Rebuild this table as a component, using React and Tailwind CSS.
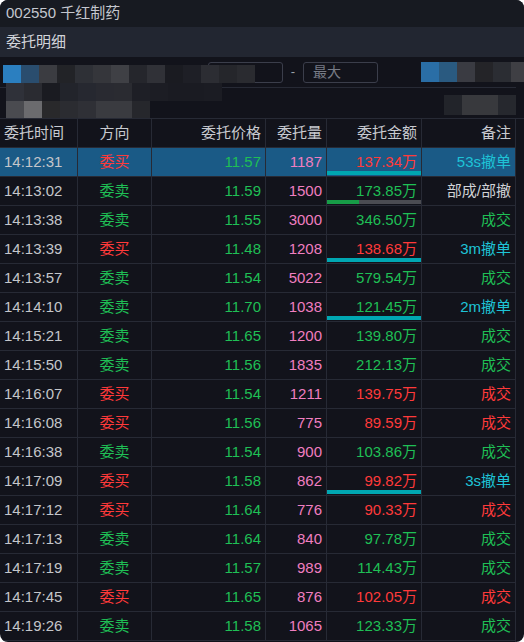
import React from "react";

const RED = "text-[#ff3a3a]";
const GREEN = "text-[#1fbf55]";
const CYAN = "text-[#1ec3d6]";

const rows = [
  ["14:12:31", "b", "11.57", "1187", "137.34万", "53s撤单", "cyan"],
  ["14:13:02", "s", "11.59", "1500", "173.85万", "部成/部撤", "part"],
  ["14:13:38", "s", "11.55", "3000", "346.50万", "成交", null],
  ["14:13:39", "b", "11.48", "1208", "138.68万", "3m撤单", "cyan"],
  ["14:13:57", "s", "11.54", "5022", "579.54万", "成交", null],
  ["14:14:10", "s", "11.70", "1038", "121.45万", "2m撤单", "cyan"],
  ["14:15:21", "s", "11.65", "1200", "139.80万", "成交", null],
  ["14:15:50", "s", "11.56", "1835", "212.13万", "成交", null],
  ["14:16:07", "b", "11.54", "1211", "139.75万", "成交", null],
  ["14:16:08", "b", "11.56", "775", "89.59万", "成交", null],
  ["14:16:38", "s", "11.54", "900", "103.86万", "成交", null],
  ["14:17:09", "b", "11.58", "862", "99.82万", "3s撤单", "cyan"],
  ["14:17:12", "b", "11.64", "776", "90.33万", "成交", null],
  ["14:17:13", "s", "11.64", "840", "97.78万", "成交", null],
  ["14:17:19", "s", "11.57", "989", "114.43万", "成交", null],
  ["14:17:45", "b", "11.65", "876", "102.05万", "成交", null],
  ["14:19:26", "s", "11.58", "1065", "123.33万", "成交", null],
];

const mosaicA = ["#2b7fc0", "#2a4d6e", "#3b3c41", "#222327", "#2e3036", "#35363b", "#3f4045", "#25262c", "#303137", "#1a1b21", "#1e1f26", "#2c2d33", "#25262b", "#2a2b30"];
const mosaicB = ["#2f3139", "#2a2b31", "#1a1b21", "#22242b", "#262830", "#292a31", "#2a2b31", "#1e1f26", "#1c1d24", "#1a1b22", "#1a1b22", "#1b1c23"];
const mosaicC = ["#4a4b50", "#6b6b6e", "#29292b", "#2b2c31", "#2f3036", "#3a3b40", "#3a3b40", "#26272c"];
const mosaicR1 = ["#2a6ea6", "#2a5a80", "#3a3b42", "#242428", "#2b2d33", "#3f3f44"];
const mosaicR2 = ["#22242a", "#38393d", "#38393d", "#26282e"];

function Blocks({ colors, w = "w-[18px]", h = "h-[18px]" }) {
  return (
    <div className="flex">
      {colors.map((c, i) => (
        <div key={i} className={`${w} ${h}`} style={{ background: c }} />
      ))}
    </div>
  );
}

export default function App() {
  const font = { fontFamily: '"Liberation Sans", "Noto Sans CJK SC", sans-serif' };
  return (
    <div className="w-[524px] h-[642px] bg-white" style={font}>
      <div className="w-[524px] h-[642px] rounded-[8px] overflow-hidden bg-[#12131b] flex flex-col text-[15px]">
        <div className="h-[27px] bg-[#171a21] flex items-center px-[6px] text-[#c4c7cf] shrink-0">
          002550 千红制药
        </div>
        <div className="h-[30px] bg-[#222631] flex items-center px-[6px] text-[#d2d4da] shrink-0">
          委托明细
        </div>
        <div className="relative h-[62px] shrink-0 border-b border-[#272a35]">
          <div className="h-[31px] border-b border-[#272a35] mr-[8px] flex items-center pl-[208px]">
            <div className="w-[75px] h-[21px] border border-[#3b3e4b] rounded-[3px]" />
            <div className="w-[20px] flex justify-center text-[#9aa0aa] text-[13px]">-</div>
            <div className="w-[75px] h-[21px] border border-[#3b3e4b] rounded-[3px] flex items-center px-[9px] text-[#777b86] text-[14px]">
              最大
            </div>
          </div>
          <div className="absolute left-[3px] top-[8px] flex flex-col">
            <Blocks colors={mosaicA} />
            <div className="pl-[3px]"><Blocks colors={mosaicB} /></div>
            <div className="pl-[3px]"><Blocks colors={mosaicC} h="h-[17px]" /></div>
          </div>
          <div className="absolute left-[421px] top-[5px] flex flex-col">
            <Blocks colors={mosaicR1} h="h-[20px]" />
          </div>
          <div className="absolute left-[444px] top-[38px] flex">
            <Blocks colors={mosaicR2} h="h-[20px]" />
          </div>
        </div>
        <div className="flex-1 flex">
          <div className="w-[516px] border-r border-[#272a35]">
            <div className="flex h-[29px] border-b border-[#272a35] text-[#c8cad0]">
              <div className="w-[78px] border-r border-[#272a35] flex items-center pl-[4px]">委托时间</div>
              <div className="w-[74px] border-r border-[#272a35] flex items-center justify-center">方向</div>
              <div className="w-[114px] border-r border-[#272a35] flex items-center justify-end pr-[4px]">委托价格</div>
              <div className="w-[61px] border-r border-[#272a35] flex items-center justify-end pr-[4px]">委托量</div>
              <div className="w-[95px] border-r border-[#272a35] flex items-center justify-end pr-[4px]">委托金额</div>
              <div className="flex-1 flex items-center justify-end pr-[4px]">备注</div>
            </div>
            {rows.map((r, i) => {
              const buy = r[1] === "b";
              const dc = buy ? RED : GREEN;
              const noteCls = r[5].includes("撤单") ? CYAN : r[5] === "成交" ? dc : "text-[#d0d2d6]";
              return (
                <div key={i} className={`flex h-[29px] border-b border-[#272a35] ${i === 0 ? "bg-[#1a5a86]" : ""}`}>
                  <div className="w-[78px] border-r border-[#272a35] flex items-center pl-[4px] text-[#c4c6ca]">{r[0]}</div>
                  <div className={`w-[74px] border-r border-[#272a35] flex items-center justify-center ${dc}`}>{buy ? "委买" : "委卖"}</div>
                  <div className={`w-[114px] border-r border-[#272a35] flex items-center justify-end pr-[4px] ${GREEN}`}>{r[2]}</div>
                  <div className="w-[61px] border-r border-[#272a35] flex items-center justify-end pr-[4px] text-[#f07ec0]">{r[3]}</div>
                  <div className={`relative w-[95px] border-r border-[#272a35] flex items-center justify-end pr-[4px] ${dc}`}>
                    {r[4]}
                    {r[6] === "cyan" && (
                      <div className="absolute left-0 right-0 bottom-[1px] h-[4px] bg-[#00a7b2]" />
                    )}
                    {r[6] === "part" && (
                      <div className="absolute left-0 right-0 bottom-[1px] h-[4px] flex">
                        <div className="w-[32px] bg-[#179c47]" />
                        <div className="flex-1 bg-[#4b4c52]" />
                      </div>
                    )}
                  </div>
                  <div className={`flex-1 flex items-center justify-end pr-[4px] ${noteCls}`}>{r[5]}</div>
                </div>
              );
            })}
          </div>
        </div>
      </div>
    </div>
  );
}
